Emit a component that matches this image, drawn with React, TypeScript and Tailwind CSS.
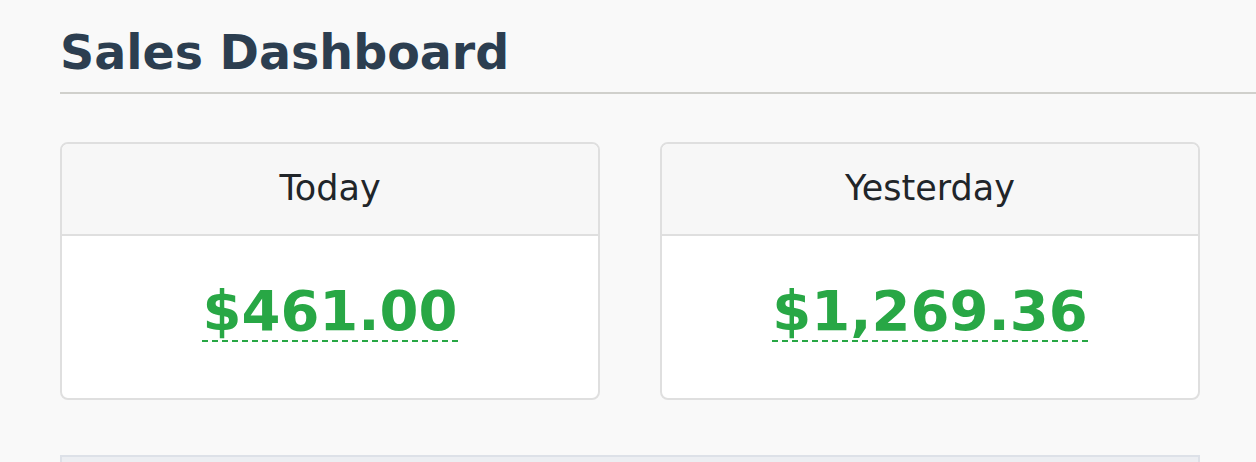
const stats = [
  { label: "Today", amount: "$461.00" },
  { label: "Yesterday", amount: "$1,269.36" }
];

const StatCard: React.FC<{ label: string; amount: string }> = (props) => {
  return (
    <div className="flex-1 h-[258px] rounded-lg border-2 border-[#dfdfdf] bg-white overflow-hidden flex flex-col">
      <div className="h-[92px] shrink-0 bg-[#f7f7f7] border-b-2 border-[#dfdfdf] flex items-center justify-center">
        <span className="text-[35px] text-[#212529]">{props.label}</span>
      </div>
      <div className="flex-1 flex items-center justify-center pb-[4px]">
        <span className="text-[56px] font-bold leading-[48px] text-[#28a745] border-b-2 border-dashed border-[#28a745] pb-[5px]">
          {props.amount}
        </span>
      </div>
    </div>
  );
};

export default function App() {
  return (
    <div
      className="h-[462px] bg-[#f9f9f9] pl-[60px] pt-[18px] overflow-hidden"
      style={{ fontFamily: '"DejaVu Sans", Verdana, sans-serif' }}
    >
      <h1 className="text-[47.5px] font-bold leading-none text-[#2c3e50] pt-[11px] pb-[15px] border-b-2 border-[#d0d0cc]">
        Sales Dashboard
      </h1>
      <div className="w-[1140px] flex gap-[60px] mt-[48px]">
        {stats.map((s) => (
          <StatCard key={s.label} label={s.label} amount={s.amount} />
        ))}
      </div>
      <div className="w-[1140px] h-[40px] mt-[55px] bg-[#eceef2] border-2 border-[#dde1e8]" />
    </div>
  );
}
